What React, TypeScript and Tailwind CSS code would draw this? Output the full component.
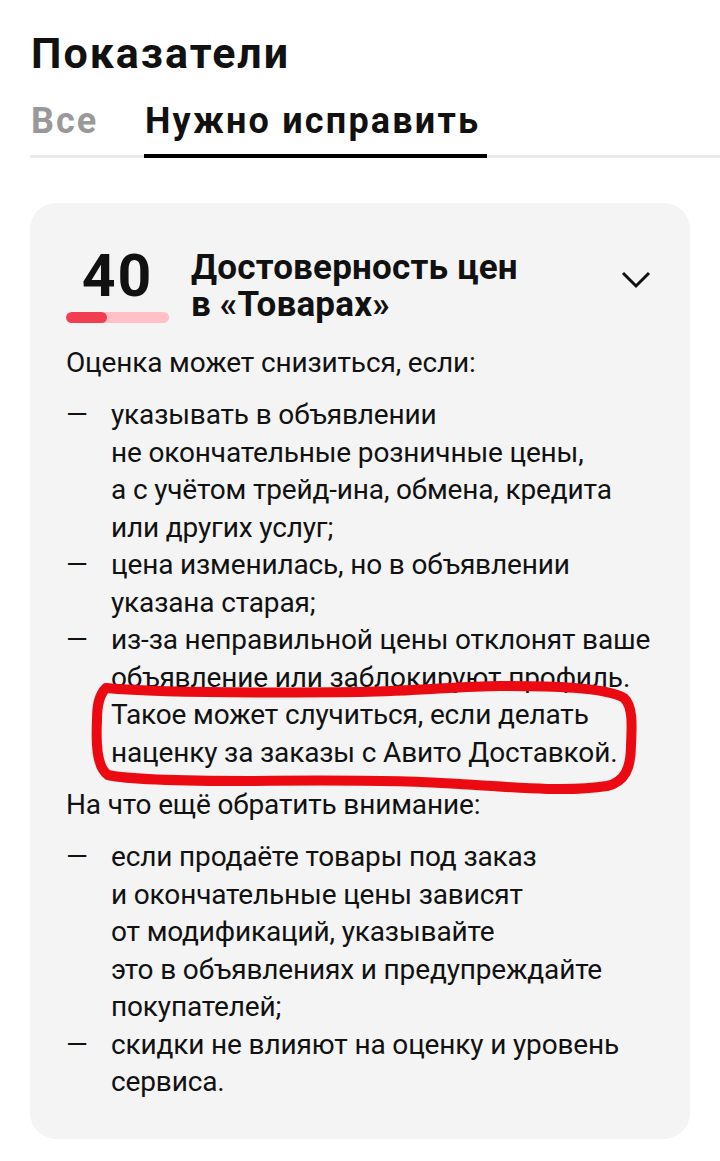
import React from "react";

const Dash = () => (
  <span className="absolute left-0 top-0 text-[28px] leading-[37.5px]">—</span>
);

function Item({ lines }: { lines: string[] }) {
  return (
    <li className="relative pl-[45px]">
      <Dash />
      {lines.map((l, i) => (
        <div key={i} className="whitespace-nowrap">
          {l}
        </div>
      ))}
    </li>
  );
}

export default function App() {
  return (
    <div
      className="relative w-[720px] h-[1161px] overflow-hidden bg-white text-[#111]"
      style={{ fontFamily: "Roboto, 'Noto Sans', sans-serif" }}
    >
      <div className="pl-[31px] pt-[27px]">
        <h1 className="text-[43px] leading-[52px] font-bold tracking-[2px]">Показатели</h1>
      </div>
      <div className="ml-[30px] mt-[20px] flex border-b-[3px] border-[#ebebeb]">
        <div className="pl-[1px] w-[114px] text-[36px] leading-[44px] font-bold text-[#999] pb-[12px] tracking-[2px]">
          Все
        </div>
        <div className="w-[343px] pl-[1px] text-[36px] leading-[44px] font-bold pb-[9px] border-b-4 border-black -mb-[3px] tracking-[2.2px] whitespace-nowrap">
          Нужно исправить
        </div>
      </div>

      <div className="mx-[30px] mt-[45px] h-[936px] rounded-[26px] bg-[#f4f4f4] pl-[36px] pr-[37px] pt-[43px]">
        <div className="flex items-start">
          <div className="flex w-[103px] flex-col items-center">
            <div className="text-[59px] leading-[60px] font-bold tracking-[2px]">40</div>
            <div className="mt-[6px] h-[11px] w-[103px] overflow-hidden rounded-full bg-[#ffc0c6]">
              <div className="h-full w-[41px] rounded-full bg-[#f23c50]" />
            </div>
          </div>
          <div className="ml-[22px] mt-[3px] flex-1 text-[35px] leading-[37px] font-bold tracking-[0.2px]">
            <div>Достоверность цен</div>
            <div>в «Товарах»</div>
          </div>
          <svg width="32" height="20" viewBox="0 0 32 20" className="mt-[25px]">
            <polyline points="2,2 15,15 28,2" fill="none" stroke="#111" strokeWidth="3" />
          </svg>
        </div>

        <div className="mt-[21px] text-[28px] leading-[37.5px] tracking-[-0.15px]">
          <p>Оценка может снизиться, если:</p>
          <ul className="mt-[14.5px]">
            <Item
              lines={[
                "указывать в объявлении",
                "не окончательные розничные цены,",
                "а с учётом трейд-ина, обмена, кредита",
                "или других услуг;",
              ]}
            />
            <Item lines={["цена изменилась, но в объявлении", "указана старая;"]} />
            <Item
              lines={[
                "из-за неправильной цены отклонят ваше",
                "объявление или заблокируют профиль.",
                "Такое может случиться, если делать",
                "наценку за заказы с Авито Доставкой.",
              ]}
            />
          </ul>
          <p className="mt-[15px]">На что ещё обратить внимание:</p>
          <ul className="mt-[14.5px]">
            <Item
              lines={[
                "если продаёте товары под заказ",
                "и окончательные цены зависят",
                "от модификаций, указывайте",
                "это в объявлениях и предупреждайте",
                "покупателей;",
              ]}
            />
            <Item lines={["скидки не влияют на оценку и уровень", "сервиса."]} />
          </ul>
        </div>
      </div>

      <svg
        className="pointer-events-none absolute left-0 top-0"
        width="720"
        height="1161"
        viewBox="0 0 720 1161"
      >
        <path
          d="M 106 688 C 150 692, 260 693, 360 692 C 420 691, 460 686, 500 686 C 550 686, 605 687, 624 698 C 633 706, 632 725, 631 745 C 631 768, 625 782, 607 786 C 570 792, 520 788, 460 784 C 400 780, 330 780, 250 781 C 180 781, 130 780, 108 775 C 96 767, 96 740, 97 720 C 97 705, 99 695, 106 688"
          fill="none"
          stroke="#ec0a12"
          strokeWidth="10"
          strokeLinecap="round"
          strokeLinejoin="round"
        />
      </svg>
    </div>
  );
}
